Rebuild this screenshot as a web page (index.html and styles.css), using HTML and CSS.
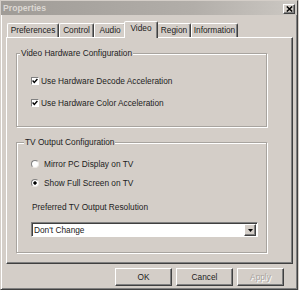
FILE: index.html
```html
<!DOCTYPE html>
<html>
<head>
<meta charset="utf-8">
<title>Properties</title>
<link rel="stylesheet" href="styles.css">
</head>
<body>
<div class="window">
  <div class="titlebar">
    <span class="title">Properties</span>
    <span class="close"><svg width="7" height="6" viewBox="0 0 7 6"><path d="M0.8 0.5 L6.2 5.5 M6.2 0.5 L0.8 5.5" stroke="#000" stroke-width="1.5" fill="none"/></svg></span>
  </div>
  <div class="tabs">
    <div class="tab tab-pref">Preferences</div>
    <div class="tab tab-control">Control</div>
    <div class="tab tab-audio">Audio</div>
    <div class="tab tab-video is-active">Video</div>
    <div class="tab tab-region">Region</div>
    <div class="tab tab-info">Information</div>
  </div>
  <div class="panel">
    <div class="group group-hw">
      <span class="legend">Video Hardware Configuration</span>
      <div class="check-row row-first"><span class="checkbox"><svg width="6" height="6" viewBox="0 0 6 6"><path d="M0.6 2.6 L2.3 4.4 L5.4 1.1" stroke="#000" stroke-width="1.4" fill="none"/></svg></span>Use Hardware Decode Acceleration</div>
      <div class="check-row"><span class="checkbox"><svg width="6" height="6" viewBox="0 0 6 6"><path d="M0.6 2.6 L2.3 4.4 L5.4 1.1" stroke="#000" stroke-width="1.4" fill="none"/></svg></span>Use Hardware Color Acceleration</div>
    </div>
    <div class="group group-tv">
      <span class="legend legend-tv">TV Output Configuration</span>
      <div class="radio-row row-first-radio"><span class="radio"></span>Mirror PC Display on TV</div>
      <div class="radio-row"><span class="radio is-on"></span>Show Full Screen on TV</div>
      <div class="field-label">Preferred TV Output Resolution</div>
      <div class="select">
        <span class="select-value">Don't Change</span>
        <span class="select-btn"><svg width="5" height="3" viewBox="0 0 5 3"><path d="M0 0 H5 L2.5 3 Z" fill="#000"/></svg></span>
      </div>
    </div>
  </div>
  <div class="buttons">
    <div class="btn btn-ok">OK</div>
    <div class="btn btn-cancel">Cancel</div>
    <div class="btn btn-apply is-disabled">Apply</div>
  </div>
</div>
</body>
</html>
```
FILE: styles.css
```css
* { box-sizing: border-box; }
html, body { margin: 0; padding: 0; }
body {
  width: 299px;
  height: 290px;
  overflow: hidden;
  background: #d4cec8;
  font-family: "Liberation Sans", Arial, sans-serif;
  font-size: 8.3px;
  color: #222;
}
.window {
  width: 298px;
  height: 290px;
  border: 1px solid;
  border-color: #d4cec8 #404040 #404040 #d4cec8;
  box-shadow: inset 1px 1px 0 #fff, inset -1px -1px 0 #808080;
  display: flex;
  flex-direction: column;
}
.titlebar {
  height: 14px;
  flex: none;
  display: flex;
  align-items: center;
  justify-content: space-between;
  padding: 0 2px;
  background: linear-gradient(to right, #a09c97, #b2aea9 65%, #ccc8c3);
}
.title {
  font-weight: bold;
  font-size: 8.7px;
  color: #dcd8d3;
}
.close {
  width: 12px;
  height: 10px;
  margin-top: 1px;
  display: flex;
  align-items: center;
  justify-content: center;
  background: #d4cec8;
  border: 1px solid;
  border-color: #fff #404040 #404040 #fff;
  box-shadow: inset -1px -1px 0 #808080;
}
.tabs {
  height: 22px;
  flex: none;
  display: flex;
  align-items: flex-end;
  padding-left: 6px;
}
.tab {
  height: 14px;
  border: 1px solid;
  border-bottom: 0;
  border-color: #fff #404040 transparent #fff;
  box-shadow: inset -1px 0 0 #808080;
  border-radius: 2px 2px 0 0;
  padding-top: 1px;
  line-height: 11px;
  text-align: center;
  white-space: nowrap;
}
.tab-pref { width: 52px; }
.tab-control { width: 35px; }
.tab-audio { width: 32px; }
.tab-region { width: 34px; }
.tab-info { width: 47px; }
.tab.is-active {
  width: 34px;
  height: 17px;
  margin: 0 -1px -1px -2px;
  position: relative;
  z-index: 1;
  background: #d4cec8;
}
.panel {
  flex: none;
  margin-left: 5px;
  width: 287px;
  height: 227px;
  border: 1px solid;
  border-color: #fff #404040 #404040 #fff;
  box-shadow: inset -1px -1px 0 #808080;
  padding: 15px 0 0 9px;
  display: flex;
  flex-direction: column;
}
.group {
  width: 251px;
  border: 1px solid #a8a49f;
  box-shadow: inset 1px 1px 0 #fff, 1px 1px 0 #fff;
  display: flex;
  flex-direction: column;
  align-items: flex-start;
  padding-left: 14px;
}
.group-hw { height: 74px; }
.group-tv { height: 111px; margin-top: 15px; }
.legend {
  margin: -7px 0 0 -11px;
  padding: 0 1px;
  line-height: 12px;
  background: #d4cec8;
  white-space: nowrap;
}
.legend-tv { margin-left: -7px; }
.check-row, .radio-row {
  display: flex;
  align-items: center;
  height: 13px;
  white-space: nowrap;
}
.check-row { gap: 2px; }
.radio-row { gap: 5px; }
.row-first { margin-top: 15px; }
.check-row + .check-row { margin-top: 9px; }
.row-first-radio { margin-top: 9px; }
.radio-row + .radio-row { margin-top: 6px; }
.checkbox {
  width: 8px;
  height: 8px;
  border: 1px solid;
  border-color: #808080 #fff #fff #808080;
  background: #fff;
  display: flex;
  align-items: center;
  justify-content: center;
}
.radio {
  width: 8px;
  height: 8px;
  border-radius: 50%;
  border: 1px solid;
  border-color: #808080 #eeeae6 #eeeae6 #808080;
  background: #fff;
}
.radio.is-on {
  background: radial-gradient(circle, #000 0 1.4px, #fff 1.9px);
}
.field-label {
  margin-top: 12px;
  line-height: 13px;
  padding-left: 1px;
}
.select {
  margin-top: 8px;
  width: 227px;
  height: 15px;
  border: 1px solid;
  border-color: #808080 #fff #fff #808080;
  box-shadow: inset 1px 1px 0 #404040;
  background: #fff;
  display: flex;
  align-items: center;
  padding-left: 2px;
}
.select-value { white-space: nowrap; }
.select-btn {
  margin-left: auto;
  margin-right: 1px;
  width: 12px;
  height: 12px;
  margin-top: 1px;
  display: flex;
  align-items: center;
  justify-content: center;
  background: #d4cec8;
  border: 1px solid;
  border-color: #fff #404040 #404040 #fff;
  box-shadow: inset -1px -1px 0 #808080;
}
.buttons {
  flex: none;
  display: flex;
  gap: 4px;
  margin-top: 4px;
  padding-left: 114px;
}
.btn {
  height: 18px;
  display: flex;
  align-items: center;
  justify-content: center;
  background: #d4cec8;
  border: 1px solid;
  border-color: #fff #404040 #404040 #fff;
  box-shadow: inset -1px -1px 0 #808080;
}
.btn-ok { width: 57px; }
.btn-cancel { width: 57px; }
.btn-apply { width: 47px; }
.btn.is-disabled {
  color: #a8a39e;
  text-shadow: 1px 1px 0 #fff;
}
```
